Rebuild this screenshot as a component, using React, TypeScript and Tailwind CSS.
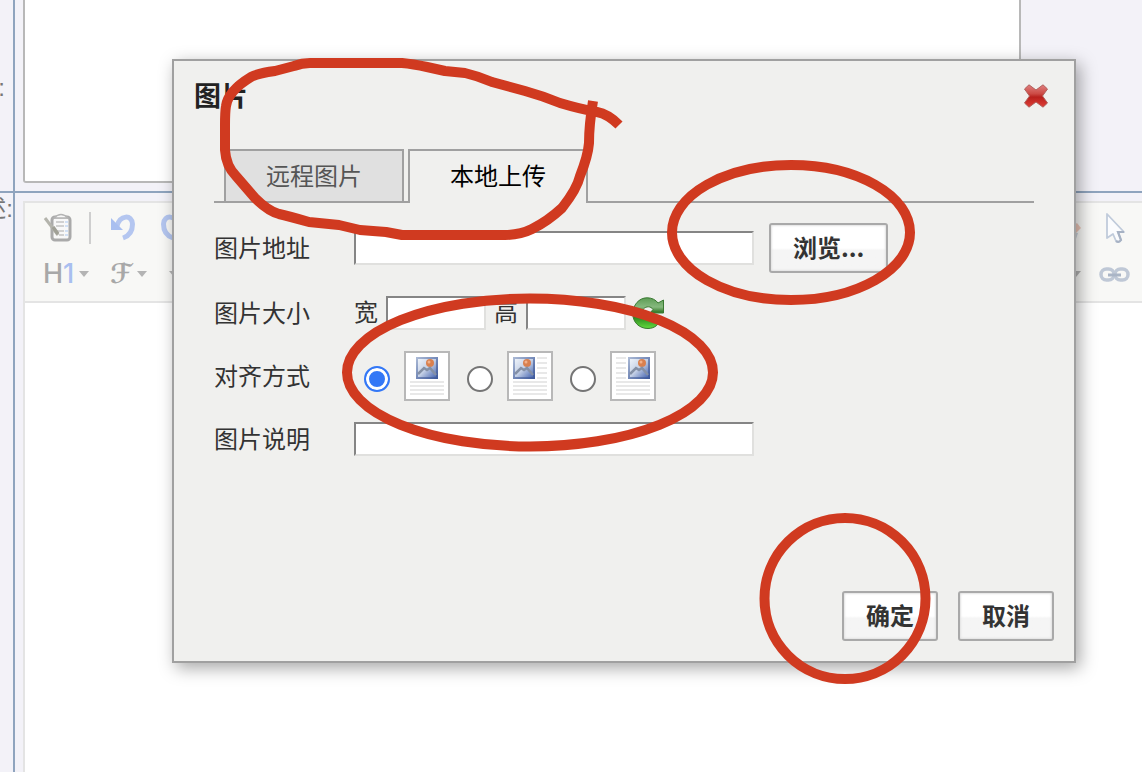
import { useState } from "react";
import type { ReactNode } from "react";

type Align = "default" | "left" | "right";

const ALIGN_OPTIONS: { value: Align; label: string }[] = [
  { value: "default", label: "默认方式" },
  { value: "left", label: "左对齐" },
  { value: "right", label: "右对齐" },
];

const TABS = ["远程图片", "本地上传"];

const INPUT_CLASS =
  "h-[34px] border-2 border-t-[#858585] border-l-[#858585] border-r-[#e0e0de] border-b-[#e0e0de] bg-white px-1 text-xl outline-none";

function CloseIcon() {
  return (
    <svg viewBox="0 0 24 24" className="h-6 w-6" aria-hidden="true">
      <defs>
        <linearGradient id="close-fill" x1="0" y1="0" x2="0" y2="1">
          <stop offset="0" stopColor="#e08080" />
          <stop offset="0.4" stopColor="#cc4a44" />
          <stop offset="0.55" stopColor="#b8201c" />
          <stop offset="1" stopColor="#e04038" />
        </linearGradient>
      </defs>
      <path
        d="M5 .8 L12 6 L19 .8 L23.500 5 L18.500 12 L23.500 19 L19 23.200 L12 18 L5 23.200 L.5 19 L5.500 12 L.5 5 Z"
        fill="url(#close-fill)"
        stroke="#b0605c"
        strokeWidth="1"
        strokeLinejoin="round"
      />
    </svg>
  );
}

function RefreshIcon() {
  return (
    <svg viewBox="0 0 32 32" className="h-8 w-8" aria-hidden="true">
      <defs>
        <linearGradient id="refresh-fill" x1="0" y1="0" x2="0" y2="1">
          <stop offset="0" stopColor="#5c9c54" />
          <stop offset="0.3" stopColor="#86b97e" />
          <stop offset="0.45" stopColor="#3c8031" />
          <stop offset="0.65" stopColor="#2f8a20" />
          <stop offset="1" stopColor="#62dc3e" />
        </linearGradient>
      </defs>
      <path
        d="M26 6 L31.500 3 V16 H18 L21 12.500 C19 9 14 9 11.500 12 C9 15 10 21 14 22 C18 23 20 21 21 18 L29 20 C28 27 23 31.500 16 31.500 C7 31.500 .8 25 .8 17 C.8 8 7 .8 15 .8 C20 .8 24 3 26 6 Z"
        fill="url(#refresh-fill)"
        stroke="#3a7a32"
        strokeWidth="1"
        strokeLinejoin="round"
      />
    </svg>
  );
}

function AlignIcon({ align }: { align: Align }) {
  const imageX = align === "default" ? 12 : align === "left" ? 6 : 18;
  const shortX = align === "left" ? 30 : 6;
  return (
    <svg viewBox="0 0 46 50" className="h-[50px] w-[46px]" aria-hidden="true">
      <defs>
        <linearGradient id={`photo-${align}`} x1="0" y1="0" x2="1" y2="1">
          <stop offset="0" stopColor="#f2f6fb" />
          <stop offset="0.5" stopColor="#c4d0e6" />
          <stop offset="1" stopColor="#3f5fae" />
        </linearGradient>
        <linearGradient id={`photo-edge-${align}`} x1="0" y1="0" x2="1" y2="1">
          <stop offset="0" stopColor="#a9b8d4" />
          <stop offset="1" stopColor="#3f5a9c" />
        </linearGradient>
      </defs>
      <rect x="1" y="1" width="44" height="48" fill="#fff" stroke="#b8b8b8" strokeWidth="2" />
      {align !== "default"
        ? [7, 12, 17, 22, 27].map((y) => (
            <line key={y} x1={shortX} x2={shortX + 10} y1={y} y2={y} stroke="#e8e8e8" strokeWidth="2" />
          ))
        : null}
      {[31, 35, 39, 43].map((y) => (
        <line key={y} x1="6" x2="40" y1={y} y2={y} stroke="#e8e8e8" strokeWidth="2" />
      ))}
      <g transform={`translate(${imageX} 6)`}>
        <rect
          x="1"
          y="1"
          width="20"
          height="20"
          fill={`url(#photo-${align})`}
          stroke={`url(#photo-edge-${align})`}
          strokeWidth="2"
        />
        <circle cx="14" cy="6" r="4" fill="#d9804f" />
        <circle cx="13" cy="5" r="1.500" fill="#f1b08a" />
        <path d="M2 17 L8 11 L11 13 L14 11 L20 18" fill="none" stroke="#8490a6" strokeWidth="2.500" />
      </g>
    </svg>
  );
}

function TemplateIcon() {
  return (
    <svg viewBox="0 0 32 32" className="h-8 w-8" fill="none" aria-hidden="true">
      <rect x="9" y="5" width="18" height="23" rx="3" fill="#f8f8f8" stroke="#aaa" strokeWidth="3" />
      <path d="M11 6 Q18 -1 25 6 Z" fill="#f8f8f8" stroke="#b4b4b4" strokeWidth="1.500" />
      <path d="M13 10h8M13 14h8M14 19h7M16 23h5" stroke="#c4c4c4" strokeWidth="1.500" />
      <path d="M22 19h3M22 14h3M22 10h3M22 23h3" stroke="#c3d7f4" strokeWidth="1.500" />
      <path d="M2 6 L15 23" stroke="#b4b4ac" strokeWidth="3" />
      <path d="M10 15 L15 22" stroke="#a0a096" strokeWidth="3.500" />
    </svg>
  );
}

function UndoIcon({ flip }: { flip?: boolean }) {
  return (
    <svg viewBox="0 0 32 32" className={flip ? "h-8 w-8 -scale-x-100" : "h-8 w-8"} fill="none" aria-hidden="true">
      <path d="M10 14 C13 3 25 2 25.500 12 C25.500 19 22 24 16 26" stroke="#b4c6f0" strokeWidth="5" />
      <path d="M4 6 L4 18 L16 18 Z" fill="#a9bff0" />
    </svg>
  );
}

function CursorIcon() {
  return (
    <svg viewBox="0 0 32 32" className="h-8 w-8" aria-hidden="true">
      <path
        d="M9 2 V26 L15 22 L18 29 Q21 31 23 28 L20 20 H26 Z"
        fill="#fbfcfe"
        stroke="#c0cbdb"
        strokeWidth="1.800"
        strokeLinejoin="round"
      />
      <path d="M26 20 H20 L23 28 Q21 31 18 29" fill="none" stroke="#a7b2c4" strokeWidth="2.200" />
    </svg>
  );
}

function LinkIcon() {
  return (
    <svg viewBox="0 0 32 32" className="h-8 w-8" fill="none" aria-hidden="true">
      <rect x="3" y="11" width="13" height="11" rx="5.500" stroke="#bfc8d6" strokeWidth="3.500" />
      <rect x="17" y="11" width="13" height="11" rx="5.500" stroke="#bfc8d6" strokeWidth="3.500" />
      <path d="M10 17h13" stroke="#aab5c6" strokeWidth="3" />
    </svg>
  );
}

function BrushIcon() {
  return (
    <svg viewBox="0 0 32 32" className="h-8 w-8" aria-hidden="true">
      <path d="M20 6 L28 13 L22 19 L14 12 Z" fill="#ccd2da" />
      <path d="M22 16 L27 11 L31 16 L25 22 Z" fill="#ecc6b8" />
      <path d="M20 20 L28 21 L26 27 Z" fill="#ccd2da" />
    </svg>
  );
}

function Caret() {
  return (
    <svg viewBox="0 0 12 8" className="h-2 w-3" aria-hidden="true">
      <path d="M1 1h10L6 7z" fill="#b4b4b4" />
    </svg>
  );
}

function ToolButton({ label, children }: { label: string; children: ReactNode }) {
  return (
    <button type="button" aria-label={label} className="flex h-8 shrink-0 items-center gap-1">
      {children}
    </button>
  );
}

function EditorToolbar() {
  return (
    <div className="flex flex-col border-b-2 border-[#e4e4e4] bg-[#f8f8f6] pt-0.5 pr-3 pb-1 pl-[18px]">
      <div className="flex h-[46px] items-center">
        <ToolButton label="插入模板">
          <TemplateIcon />
        </ToolButton>
        <span className="ml-3.5 h-8 w-0.5 bg-[#cfcfcf]" />
        <div className="ml-4 flex gap-[18px]">
          <ToolButton label="后退">
            <UndoIcon />
          </ToolButton>
          <ToolButton label="前进">
            <UndoIcon flip />
          </ToolButton>
        </div>
        <div className="ml-auto flex gap-4">
          <ToolButton label="清理">
            <BrushIcon />
          </ToolButton>
          <ToolButton label="全选">
            <CursorIcon />
          </ToolButton>
        </div>
      </div>
      <div className="flex h-[46px] items-center">
        <div className="flex gap-5">
          <ToolButton label="段落">
            <span className="font-['Inter'] text-[27px] leading-8 font-medium text-[#a8a8a8]">
              H<span className="text-[#a9bff0]">1</span>
            </span>
            <Caret />
          </ToolButton>
          <ToolButton label="字体">
            <span className="font-['DejaVu_Sans'] text-[27px] leading-8 font-bold text-[#a8a8a8] italic">ℱ</span>
            <Caret />
          </ToolButton>
          <ToolButton label="字号">
            <Caret />
          </ToolButton>
        </div>
        <div className="ml-auto flex items-center gap-4">
          <ToolButton label="更多">
            <Caret />
          </ToolButton>
          <ToolButton label="超级链接">
            <LinkIcon />
          </ToolButton>
        </div>
      </div>
    </div>
  );
}

function PageForm() {
  return (
    <div className="grid min-h-screen grid-cols-[15px_1fr] grid-rows-[193px_1fr] bg-[#f3f2f8] text-2xl text-[#777]">
      <label
        htmlFor="summary"
        className="flex items-center justify-end overflow-hidden border-r-2 border-b-2 border-[#8fa4be] pr-2 pb-4 whitespace-nowrap"
      >
        :
      </label>
      <div className="border-b-2 border-[#8fa4be] px-2 pb-2">
        <textarea
          id="summary"
          className="block h-full w-full max-w-[998px] resize-none rounded-b-[3px] border-2 border-t-0 border-[#b8b8b8] bg-white outline-none"
        />
      </div>
      <div className="flex justify-end overflow-hidden border-r-2 border-[#8fa4be] whitespace-nowrap">述:</div>
      <div className="min-w-0 pt-2 pl-2">
        <div className="h-full border-t-2 border-l-2 border-[#e4e4e4] bg-white">
          <EditorToolbar />
        </div>
      </div>
    </div>
  );
}

function Row({ htmlFor, label, children }: { htmlFor?: string; label: string; children: ReactNode }) {
  return (
    <div className="flex items-center">
      <label htmlFor={htmlFor} className="w-[140px] shrink-0 pt-0.5 leading-8">
        {label}
      </label>
      {children}
    </div>
  );
}

function DialogButton({ children, onClick }: { children: ReactNode; onClick?: () => void }) {
  return (
    <button
      type="button"
      onClick={onClick}
      className="h-[50px] rounded-[3px] border-2 border-[#a9a9a9] bg-linear-to-b from-white from-50% to-[#f5f5f5] to-55% px-[22px] pb-0.5 font-['Noto_Sans_CJK_SC',sans-serif] text-2xl leading-8 font-bold text-[#333] shadow-[inset_0_0_2px_1px_#e2e2e2]"
    >
      {children}
    </button>
  );
}

function ImageDialog() {
  const [tab, setTab] = useState(1);
  const [align, setAlign] = useState<Align>("default");

  return (
    <div
      role="dialog"
      aria-labelledby="dialog-title"
      className="absolute top-[59px] left-[172px] w-[904px] border-2 border-[#a0a0a0] bg-[#f0f0ee] text-2xl text-[#333] shadow-[4px_5px_16px_rgba(0,0,0,0.35)]"
    >
      <div className="flex h-[70px] items-center justify-between pr-[26px] pl-5">
        <h2 id="dialog-title" className="pt-0.5 text-[27px] leading-8 font-bold text-[#222]">
          图片
        </h2>
        <button type="button" aria-label="关闭">
          <CloseIcon />
        </button>
      </div>

      <div className="min-h-[440px] px-10 pt-[18px]">
        <div role="tablist" className="flex gap-1 border-b-2 border-[#a0a0a0] pl-2.5">
          {TABS.map((name, index) => (
            <button
              key={name}
              type="button"
              role="tab"
              aria-selected={tab === index}
              onClick={() => setTab(index)}
              className={
                tab === index
                  ? "-mb-0.5 h-[54px] w-[180px] border-2 border-b-0 border-[#a0a0a0] bg-[#f0f0ee] text-black"
                  : "h-[52px] w-[180px] border-2 border-b-0 border-[#a0a0a0] bg-[#e0e0e0] pt-0.5 text-[#555]"
              }
            >
              {name}
            </button>
          ))}
        </div>

        <form className="flex flex-col gap-[21px] pt-5">
          <div className="pb-0.5">
            <Row htmlFor="image-url" label="图片地址">
              <input id="image-url" type="text" className={`${INPUT_CLASS} w-[400px]`} />
              <div className="ml-[15px]">
                <DialogButton>浏览...</DialogButton>
              </div>
            </Row>
          </div>

          <Row htmlFor="image-width" label="图片大小">
            <div className="flex items-center gap-2">
              <label htmlFor="image-width" className="leading-8">
                宽
              </label>
              <input id="image-width" type="text" className={`${INPUT_CLASS} w-[100px]`} />
              <label htmlFor="image-height" className="leading-8">
                高
              </label>
              <input id="image-height" type="text" className={`${INPUT_CLASS} w-[100px]`} />
            </div>
            <button type="button" aria-label="重置大小" className="ml-1.5">
              <RefreshIcon />
            </button>
          </Row>

          <Row label="对齐方式">
            <div className="flex gap-[17px] pl-2.5">
              {ALIGN_OPTIONS.map((option) => (
                <label key={option.value} className="flex items-center gap-3.5">
                  <input
                    type="radio"
                    name="align"
                    aria-label={option.label}
                    checked={align === option.value}
                    onChange={() => setAlign(option.value)}
                    className="mt-1.5 h-[26px] w-[26px] appearance-none rounded-full border-2 border-[#757575] bg-white checked:border-[#3478f6] checked:bg-[#3478f6] checked:shadow-[inset_0_0_0_3px_#fff]"
                  />
                  <AlignIcon align={option.value} />
                </label>
              ))}
            </div>
          </Row>

          <Row htmlFor="image-title" label="图片说明">
            <input id="image-title" type="text" className={`${INPUT_CLASS} w-[400px]`} />
          </Row>
        </form>
      </div>

      <div className="flex justify-end gap-5 p-5">
        <DialogButton>确定</DialogButton>
        <DialogButton>取消</DialogButton>
      </div>
    </div>
  );
}

// Red pen marks drawn over the dialog
function Annotations() {
  return (
    <svg
      viewBox="0 0 1142 772"
      className="pointer-events-none absolute top-0 left-0 h-[772px] w-[1142px] max-w-none"
      fill="none"
      stroke="#d03a20"
      strokeWidth="10"
      strokeLinejoin="round"
      aria-hidden="true"
    >
      <path d="M619 125 Q608 114 597 112 Q580 109 560 103 Q543 96 525 91 L492 82 Q478 76 465 73 L445 71 L427 67 Q413 64 402 63 H310 Q302 63 294 66 L275 71 Q259 73 251 77 Q228 91 226 106 Q225 112 225 125 V150 Q226 166 236 176 L255 198 Q268 211 279 214 Q288 216 309 222 L339 225 L360 230 L386 232 L402 235 H505 Q520 235 532 229 Q548 221 562 208 Q577 189 580 176 Q588 156 589 143 Q589 125 593 101" />
      <ellipse cx="791" cy="232.500" rx="119" ry="67.500" />
      <ellipse cx="530" cy="372.500" rx="183" ry="74" />
      <circle cx="845" cy="598.500" r="80.500" />
    </svg>
  );
}

export default function App() {
  return (
    <div className="relative min-h-screen overflow-hidden font-['Liberation_Sans','Noto_Sans_CJK_SC',sans-serif]">
      <PageForm />
      <ImageDialog />
      <Annotations />
    </div>
  );
}
